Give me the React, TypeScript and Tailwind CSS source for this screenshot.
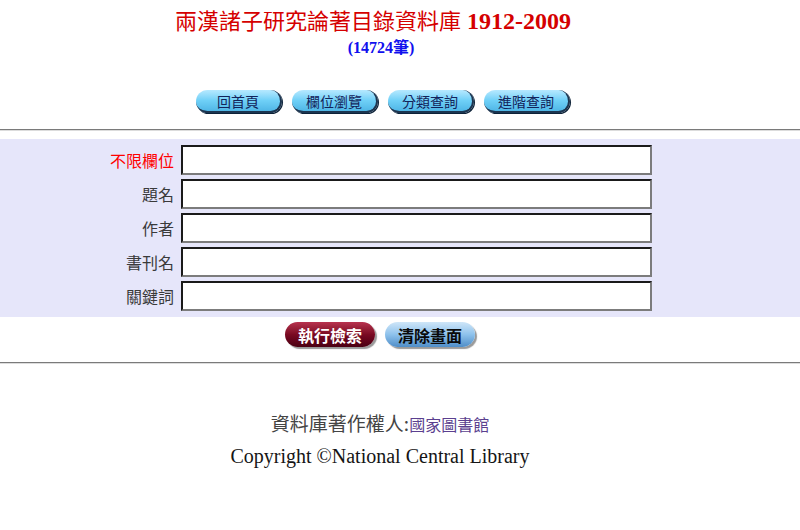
import React from "react"

const serif = "font-['Liberation_Serif','Noto_Sans_CJK_TC',serif]"
const cjk = "font-['Noto_Sans_CJK_TC','Liberation_Sans',sans-serif]"

const navItems = ["回首頁", "欄位瀏覽", "分類查詢", "進階查詢"]

const fields = [
  { label: "不限欄位", red: true },
  { label: "題名", red: false },
  { label: "作者", red: false },
  { label: "書刊名", red: false },
  { label: "關鍵詞", red: false },
]

// pill buttons that mimic the old image buttons
const NavButton = ({ text }: { text: string }) => (
  <button
    className={`${cjk} h-[23px] w-[86px] rounded-full border-r-2 border-b-2 border-[#1c3550] bg-gradient-to-b from-[#b6e9ff] via-[#6fd0f7] to-[#4fb6e6] text-[14px] leading-[20px] text-[#13235a] shadow-[1px_1px_0_#0d2238]`}
  >
    {text}
  </button>
)

const Divider = () => <div className="h-[2px] w-full border-t border-[#7a7a7a] border-b border-b-[#dcdcdc]" />

export default function App() {
  return (
    <div className="h-[530px] w-[800px] bg-white">
      <div className="w-[760px] text-center">
        <h1 className={`${serif} mt-[5px] h-[29px] text-[24px] leading-[28px] font-normal text-[#d50000] pr-[14px]`}>
          <span className={`${cjk} text-[22px]`}>兩漢諸子研究論著目錄資料庫</span>{" "}
          <span className="font-bold">1912-2009</span>
        </h1>
        <div className={`${serif} mt-[2px] h-[20px] pl-[2px] text-[16px] leading-[20px] font-bold text-[#1010ee]`}>
          (14724<span className={cjk}>筆</span>)
        </div>
        <div className="mt-[34px] flex justify-center gap-[10px] pl-[6px]">
          {navItems.map((t) => (
            <NavButton key={t} text={t} />
          ))}
        </div>
      </div>

      <div className="mt-[16px]">
        <Divider />
      </div>

      <div className="mt-[8px] flex flex-col gap-[4px] bg-[#e6e6fa] py-[6px]">
        {fields.map((f) => (
          <div key={f.label} className="flex items-center">
            <label
              className={`${cjk} w-[174px] text-right text-[16px] leading-[30px] ${f.red ? "text-[#ff0000]" : "text-[#3a3a3a]"}`}
            >
              {f.label}
            </label>
            <input
              type="text"
              className="ml-[7px] h-[30px] w-[471px] border-2 border-t-[#1a1a1a] border-l-[#1a1a1a] border-r-[#7c7c7c] border-b-[#7c7c7c] bg-white px-1 outline-none"
            />
          </div>
        ))}
      </div>

      <div className="w-[760px]">
        <div className="mt-[5px] flex justify-center gap-[10px]">
          <button
            className={`${cjk} h-[25px] w-[90px] rounded-full bg-gradient-to-b from-[#b8324f] via-[#7a0a22] to-[#4a0012] text-[16px] leading-[22px] font-bold text-white shadow-[2px_2px_1px_#9a9a9a]`}
          >
            執行檢索
          </button>
          <button
            className={`${cjk} h-[25px] w-[90px] rounded-full bg-gradient-to-b from-[#cfe6f8] via-[#8ec2ec] to-[#4f8ec8] text-[16px] leading-[22px] font-bold text-[#0a0a0a] shadow-[2px_2px_1px_#9a9a9a]`}
          >
            清除畫面
          </button>
        </div>
      </div>

      <div className="mt-[15px]">
        <Divider />
      </div>

      <div className="w-[760px] pt-[47px] text-center">
        <div className={`${cjk} h-[26px] text-[19px] leading-[24px] text-[#444444]`}>
          資料庫著作權人:<span className="text-[16px] text-[#5b3f8f]">國家圖書館</span>
        </div>
        <div className={`${serif} mt-[6px] text-[20px] leading-[26px] text-[#151515]`}>
          Copyright ©National Central Library
        </div>
      </div>
    </div>
  )
}
